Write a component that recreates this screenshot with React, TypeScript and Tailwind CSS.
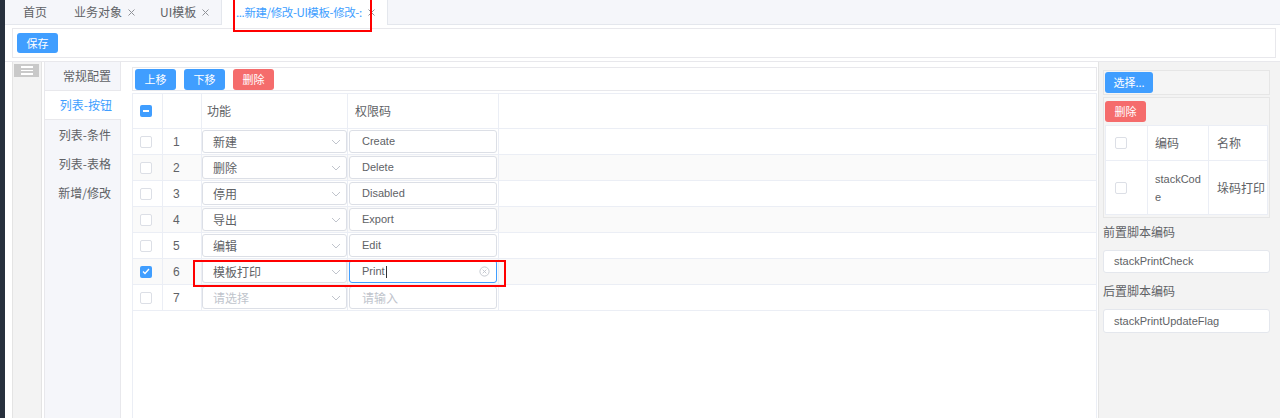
import React from "react";

type Row = {
  no: number;
  fn: string;
  code: string;
  checked?: boolean;
  focused?: boolean;
  empty?: boolean;
};

const rows: Row[] = [
  { no: 1, fn: "新建", code: "Create" },
  { no: 2, fn: "删除", code: "Delete" },
  { no: 3, fn: "停用", code: "Disabled" },
  { no: 4, fn: "导出", code: "Export" },
  { no: 5, fn: "编辑", code: "Edit" },
  { no: 6, fn: "模板打印", code: "Print", checked: true, focused: true },
  { no: 7, fn: "请选择", code: "请输入", empty: true },
];

const latin = "font-['Liberation_Sans','Noto_Sans_CJK_SC',sans-serif] text-[11px]";

const Checkbox = ({ state }: { state?: "checked" | "half" }) => {
  if (state === "checked") {
    return (
      <span className="w-[12px] h-[12px] rounded-[2px] bg-[#409eff] flex items-center justify-center">
        <svg width="8" height="7" viewBox="0 0 8 7" fill="none">
          <path d="M1 3.5l2 2 4-4.5" stroke="white" strokeWidth="1.3" />
        </svg>
      </span>
    );
  }
  if (state === "half") {
    return (
      <span className="w-[12px] h-[12px] rounded-[2px] bg-[#409eff] flex items-center justify-center">
        <span className="w-[6px] h-[1.5px] bg-white" />
      </span>
    );
  }
  return (
    <span className="w-[12px] h-[12px] rounded-[2px] border border-[#dcdfe6] bg-white" />
  );
};

const Chevron = () => (
  <svg width="10" height="6" viewBox="0 0 10 6" fill="none">
    <path d="M1 1l4 4 4-4" stroke="#c0c4cc" strokeWidth="1" />
  </svg>
);

const Close = () => (
  <svg width="7" height="7" viewBox="0 0 7 7" fill="none">
    <path d="M0.5 0.5l6 6M6.5 0.5l-6 6" stroke="#909399" strokeWidth="1" />
  </svg>
);

const Tab = ({ label, close, className }: { label: string; close?: boolean; className: string }) => (
  <div className={`h-full flex items-center gap-[6px] text-[12px] text-[#606266] ${className}`}>
    <span>{label}</span>
    {close && <Close />}
  </div>
);

const Btn = ({ label, red, w }: { label: string; red?: boolean; w: string }) => (
  <button
    className={`${w} h-[21px] rounded-[3px] text-[11px] text-white flex items-center justify-center ${
      red ? "bg-[#f56c6c]" : "bg-[#409eff]"
    }`}
  >
    {label}
  </button>
);

export default function App() {
  return (
    <div className="relative w-[1280px] h-[418px] flex overflow-hidden bg-white font-['Noto_Sans_CJK_SC','Liberation_Sans',sans-serif]">
      <div className="w-[5px] h-full bg-[#27303d]" />
      <div className="flex-1 flex flex-col min-w-0">
        {/* tabs */}
        <div className="h-[25px] flex bg-[#f5f6fa] border-b border-[#e4e7ed]">
          <Tab label="首页" className="w-[51px] pl-[18px]" />
          <Tab label="业务对象" close className="w-[86px] pl-[18px]" />
          <Tab label="UI模板" close className="w-[79px] pl-[18px]" />
          <div className="w-[167px] h-[25px] bg-white border-x border-[#e4e7ed] flex items-center gap-[6px] pl-[14px] text-[11.5px] tracking-[-0.4px] text-[#409eff] whitespace-nowrap">
            <span>...新建/修改-UI模板-修改-:</span>
            <Close />
          </div>
        </div>

        {/* save bar */}
        <div className="mt-[3px] ml-[7px] mr-[4px] h-[30px] border border-[#e8e8ec] bg-white flex items-center pl-[4px]">
          <button className="w-[41px] h-[20px] rounded-[3px] bg-[#409eff] text-white text-[11px]">
            保存
          </button>
        </div>

        {/* body */}
        <div className="mt-[3px] flex-1 flex border-t border-[#e8e8ec]">
          <div className="ml-[7px] w-[30px] border-x border-[#e4e4e4] bg-[#f3f3f3] pt-[2px] pl-[1px]">
            <div className="w-[25px] h-[13px] bg-[#c9c9c9] flex flex-col items-center justify-center gap-[2px]">
              <span className="w-[12px] h-[1.5px] bg-white" />
              <span className="w-[12px] h-[1.5px] bg-white" />
              <span className="w-[12px] h-[1.5px] bg-white" />
            </div>
          </div>

          <div className="ml-[2px] w-[77px] border-x border-[#e8e8ec] bg-[#f5f6fa] text-[12px] text-[#606266] text-right">
            <div className="h-[29px] flex items-center justify-end pr-[9px] border-b border-[#e8e8ec]">常规配置</div>
            <div className="h-[29px] flex items-center justify-end pr-[9px] bg-white text-[#409eff] border-b border-[#e8e8ec] -mr-[1px]">
              列表-按钮
            </div>
            <div className="h-[29px] flex items-center justify-end pr-[9px]">列表-条件</div>
            <div className="h-[29px] flex items-center justify-end pr-[9px]">列表-表格</div>
            <div className="h-[29px] flex items-center justify-end pr-[9px]">新增/修改</div>
          </div>

          {/* main */}
          <div className="ml-[11px] w-[965px] flex flex-col pt-[5px]">
            <div className="h-[24px] border border-[#e8e8ec] flex items-center gap-[8px] pl-[2px]">
              <Btn label="上移" w="w-[41px]" />
              <Btn label="下移" w="w-[41px]" />
              <Btn label="删除" red w="w-[41px]" />
            </div>
            <div className="mt-[2px] flex-1 border-l border-r border-t border-[#ebeef5] text-[12px] text-[#606266]">
              <div className="h-[35px] flex border-b border-[#ebeef5]">
                <div className="w-[30px] border-r border-[#ebeef5] flex items-center pl-[7px]">
                  <Checkbox state="half" />
                </div>
                <div className="w-[39px] border-r border-[#ebeef5]" />
                <div className="w-[146px] border-r border-[#ebeef5] flex items-center pl-[5px]">功能</div>
                <div className="w-[151px] border-r border-[#ebeef5] flex items-center pl-[7px]">权限码</div>
                <div className="flex-1" />
              </div>
              {rows.map((r) => (
                <div
                  key={r.no}
                  className={`h-[26px] flex border-b border-[#ebeef5] ${r.no % 2 === 0 ? "bg-[#fafafa]" : "bg-white"}`}
                >
                  <div className="w-[30px] border-r border-[#ebeef5] flex items-center pl-[7px]">
                    <Checkbox state={r.checked ? "checked" : undefined} />
                  </div>
                  <div className="w-[39px] border-r border-[#ebeef5] flex items-center pl-[10px] font-['Liberation_Sans',sans-serif] text-[12px]">
                    {r.no}
                  </div>
                  <div className="w-[146px] border-r border-[#ebeef5] flex items-center">
                    <div className="w-full h-[23px] rounded-[3px] border border-[#dcdfe6] bg-white flex items-center justify-between pl-[10px] pr-[5px]">
                      <span className={r.empty ? "text-[#c0c4cc]" : ""}>{r.fn}</span>
                      <Chevron />
                    </div>
                  </div>
                  <div className="w-[151px] border-r border-[#ebeef5] flex items-center px-[1px]">
                    <div
                      className={`w-full h-[23px] rounded-[3px] border bg-white flex items-center justify-between pl-[12px] pr-[6px] ${
                        r.focused ? "border-[#409eff]" : "border-[#dcdfe6]"
                      }`}
                    >
                      <span
                        className={`flex items-center ${
                          r.empty ? "text-[#c0c4cc] text-[12px]" : `${latin} text-[#606266]`
                        }`}
                      >
                        {r.code}
                        {r.focused && <span className="ml-[1px] w-[1px] h-[12px] bg-[#303133]" />}
                      </span>
                      {r.focused && (
                        <svg width="11" height="11" viewBox="0 0 12 12" fill="none">
                          <circle cx="6" cy="6" r="5" stroke="#c0c4cc" />
                          <path d="M4 4l4 4M8 4l-4 4" stroke="#c0c4cc" />
                        </svg>
                      )}
                    </div>
                  </div>
                  <div className="flex-1" />
                </div>
              ))}
            </div>
          </div>

          {/* right panel */}
          <div className="ml-[1px] flex-1 border-l border-[#e4e4e4] bg-[#f3f3f3] pl-[4px] pr-[10px] pt-[8px] text-[12px] text-[#606266]">
            <div className="h-[25px] border border-[#e6e6e6] bg-[#f5f5f5] flex items-center pl-[1px]">
              <Btn label="选择..." w="w-[48px]" />
            </div>
            <div className="mt-[2px] border border-[#e6e6e6] bg-[#f5f5f5] pt-[3px] pl-[1px] pr-[1px] pb-[2px]">
              <Btn label="删除" red w="w-[41px]" />
              <div className="mt-[3px] bg-white border border-[#ebeef5]">
                <div className="h-[35px] flex border-b border-[#ebeef5]">
                  <div className="w-[42px] border-r border-[#ebeef5] flex items-center pl-[9px]">
                    <Checkbox />
                  </div>
                  <div className="w-[61px] border-r border-[#ebeef5] flex items-center pl-[7px]">编码</div>
                  <div className="flex-1 flex items-center pl-[8px]">名称</div>
                </div>
                <div className="h-[53px] flex">
                  <div className="w-[42px] border-r border-[#ebeef5] flex items-center pl-[9px]">
                    <Checkbox />
                  </div>
                  <div className="w-[61px] border-r border-[#ebeef5] flex items-center pl-[7px]">
                    <span className={`w-[48px] break-all leading-[18px] ${latin} text-[11.5px]`}>stackCode</span>
                  </div>
                  <div className="flex-1 flex items-center pl-[8px] text-[12px]">垛码打印</div>
                </div>
              </div>
            </div>
            <div className="mt-[6px] leading-[16px]">前置脚本编码</div>
            <div className={`mt-[10px] h-[23px] border border-[#e4e7ed] rounded-[3px] bg-white flex items-center pl-[10px] ${latin}`}>
              stackPrintCheck
            </div>
            <div className="mt-[10px] leading-[16px]">后置脚本编码</div>
            <div className={`mt-[10px] h-[24px] border border-[#e4e7ed] rounded-[3px] bg-white flex items-center pl-[10px] ${latin}`}>
              stackPrintUpdateFlag
            </div>
          </div>
        </div>
      </div>

      {/* annotation boxes */}
      <div className="absolute left-[233px] top-[-2px] w-[139px] h-[34px] border-2 border-[#ff0000]" />
      <div className="absolute left-[193px] top-[260px] w-[313px] h-[27px] border-2 border-[#ff0000]" />
    </div>
  );
}
